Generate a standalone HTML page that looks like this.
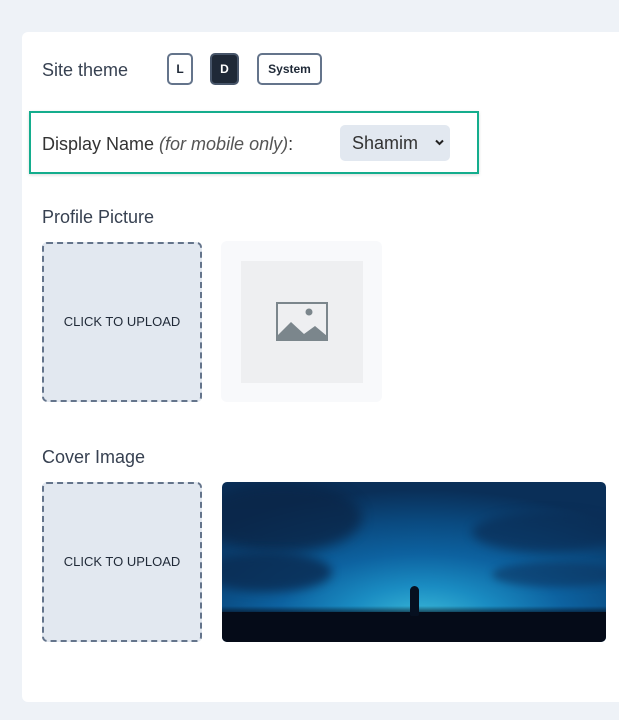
<!DOCTYPE html>
<html><head><style>
body{margin:0;background:#eef2f7;font-family:"Liberation Sans",sans-serif;width:619px;height:720px;overflow:hidden;position:relative}
.card{position:absolute;left:22px;top:32px;width:640px;height:670px;background:#fff;border-radius:6px}
.a{position:absolute}
.t{color:#374151;font-size:18px}
.btn{position:absolute;top:53px;height:28px;border:2px solid #64748b;border-radius:5px;font-size:12px;font-weight:bold;color:#1f2937;text-align:center;line-height:28px;background:#fff}
.up{position:absolute;width:156px;height:156px;border:2px dashed #64748b;border-radius:5px;background:#e2e8f0;font-size:13px;color:#1f2937;text-align:center;line-height:156px}
</style></head><body>
<div class="card"></div>
<div class="a t" style="left:42px;top:60px">Site theme</div>
<div class="btn" style="left:167px;width:22px">L</div>
<div class="btn" style="left:210px;width:25px;background:#1f2937;color:#fff;border-color:#475569">D</div>
<div class="btn" style="left:257px;width:61px">System</div>
<div class="a" style="left:29px;top:111px;width:446px;height:59px;border:2px solid #14ad8d;box-shadow:0 1px 3px rgba(0,0,0,.15)"></div>
<div class="a t" style="left:42px;top:134px;color:#333">Display Name <i style="color:#555">(for mobile only)</i>:</div>
<div class="a" style="left:340px;top:125px;width:110px;height:36px;background:#e2e8f0;border-radius:5px;font-size:18px;color:#333;line-height:36px">
<span style="margin-left:12px">Shamim</span><svg style="position:absolute;left:95px;top:14px" width="9" height="7" viewBox="0 0 9 7"><path d="M1 1.5L4.5 5L8 1.5" fill="none" stroke="#222" stroke-width="2"/></svg></div>
<div class="a t" style="left:42px;top:207px">Profile Picture</div>
<div class="up" style="left:42px;top:242px">CLICK TO UPLOAD</div>
<div class="a" style="left:221px;top:241px;width:161px;height:161px;background:#f8f9fb;border-radius:6px"></div>
<div class="a" style="left:241px;top:261px;width:122px;height:122px;background:#eeeff1"></div>
<svg class="a" style="left:276px;top:302px" width="52" height="40" viewBox="0 0 52 40"><rect x="1" y="1" width="50" height="37" fill="none" stroke="#7b868c" stroke-width="2"/><circle cx="33" cy="10" r="3.5" fill="#7b868c"/><path d="M1 38L1 34L15 20L28 32L39 24L51 34L51 38Z" fill="#7b868c"/></svg>
<div class="a t" style="left:42px;top:447px">Cover Image</div>
<div class="up" style="left:42px;top:482px">CLICK TO UPLOAD</div>
<div class="a" style="left:222px;top:482px;width:384px;height:160px;border-radius:5px;overflow:hidden;background:radial-gradient(ellipse 75% 80% at 52% 85%,#3ab9d8 0%,#1a8cc2 25%,#0d62a0 50%,#0a4a80 75%,#0a2f58 100%)">
<div class="a" style="left:-20px;top:0;width:160px;height:70px;background:#0a2648;border-radius:50%;opacity:.8;filter:blur(6px)"></div>
<div class="a" style="left:-20px;top:70px;width:130px;height:40px;background:#0a2a50;border-radius:50%;opacity:.8;filter:blur(5px)"></div>
<div class="a" style="left:250px;top:30px;width:150px;height:40px;background:#0b2d55;border-radius:50%;opacity:.7;filter:blur(5px)"></div>
<div class="a" style="left:270px;top:80px;width:130px;height:25px;background:#0d3560;border-radius:50%;opacity:.6;filter:blur(4px)"></div>
<div class="a" style="left:0;top:130px;width:384px;height:30px;background:#050b18"></div>
<div class="a" style="left:0;top:124px;width:384px;height:10px;background:linear-gradient(rgba(5,11,24,0),#050b18)"></div>
<div class="a" style="left:188px;top:104px;width:9px;height:30px;background:#061020;border-radius:5px 5px 2px 2px"></div>
</div>
</body></html>
